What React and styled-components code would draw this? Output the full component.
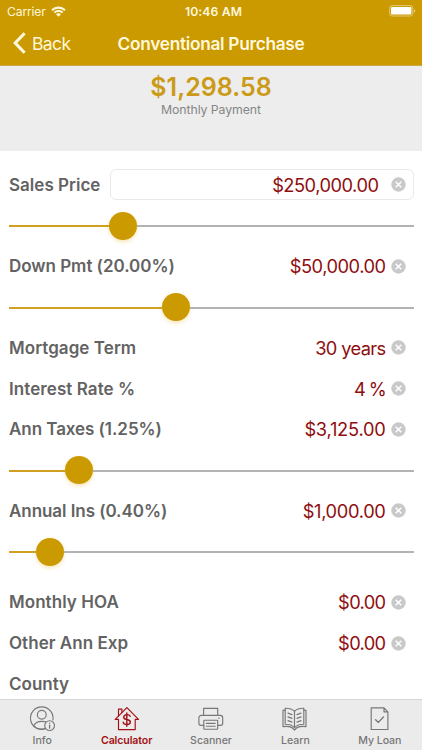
import React from "react";
import styled, { createGlobalStyle } from "styled-components";

const gold = "#cb9900";
const cream = "#fff8dc";
const maroon = "#8f0e10";

const GlobalStyle = createGlobalStyle`
  *, *::before, *::after { box-sizing: border-box; }
  body { margin: 0; background: #fff; font-family: Inter, "Liberation Sans", sans-serif; }
  button { font: inherit; }
`;

const Screen = styled.div`
  display: flex;
  flex-direction: column;
  width: 422px;
  height: 750px;
  overflow: hidden;
  background: #fff;
`;

const Header = styled.header`
  flex: none;
  height: 66px;
  background: ${gold};
  border-bottom: 1px solid #cda748;
  color: ${cream};
`;

const StatusBar = styled.div`
  display: grid;
  grid-template-columns: 1fr auto 1fr;
  align-items: center;
  height: 22px;
  padding: 0 5px 0 7px;
`;

const Carrier = styled.div`
  display: flex;
  align-items: center;
  gap: 5px;
  font-size: 12.2px;
  letter-spacing: -0.18px;
`;

const Clock = styled.div`
  font-size: 12.2px;
  font-weight: 600;
  letter-spacing: 0.12px;
  padding-left: 3px;
`;

const BatterySlot = styled.div`
  display: flex;
  justify-content: flex-end;
`;

const NavBar = styled.div`
  display: grid;
  grid-template-columns: 1fr auto 1fr;
  align-items: center;
  height: 42px;
  padding: 0 12px;
`;

const BackButton = styled.button`
  display: flex;
  align-items: center;
  gap: 6px;
  padding: 0;
  border: 0;
  background: none;
  color: inherit;
  font-size: 17.5px;
  letter-spacing: -0.6px;
`;

const Title = styled.h1`
  margin: 0;
  font-size: 17.3px;
  font-weight: 600;
  letter-spacing: -0.3px;
`;

const Summary = styled.section`
  flex: none;
  height: 85px;
  padding-top: 7px;
  background: #ededed;
  text-align: center;
`;

const Amount = styled.div`
  color: #cb9a16;
  font-size: 25px;
  line-height: 29px;
  font-weight: 600;
  letter-spacing: 0;
`;

const Caption = styled.div`
  color: #868686;
  font-size: 12.3px;
  line-height: 16px;
  letter-spacing: -0.08px;
`;

const Form = styled.main`
  flex: 1;
  min-height: 0;
  overflow: hidden;
  padding: 13.6px 8.5px 0 9px;
`;

const Row = styled.div`
  display: flex;
  align-items: center;
  height: 40.75px;
  margin-top: ${(p) => (p.$spaced ? "10px" : "0")};
`;

const Label = styled.label`
  color: #636363;
  font-size: 17px;
  font-weight: 600;
  letter-spacing: ${(p) => p.$track}px;
  white-space: nowrap;
`;

const Field = styled.div`
  flex: 1;
  display: flex;
  align-items: center;
  justify-content: flex-end;
  height: 31px;
  gap: ${(p) => (p.$boxed ? "12px" : "5px")};
  margin-left: 10px;
  padding-right: ${(p) => (p.$boxed ? "7px" : "8px")};
  border: ${(p) => (p.$boxed ? "1px solid #e9e9e9" : "0")};
  border-radius: 6px;
`;

const Value = styled.span`
  color: ${maroon};
  font-size: 18.3px;
  letter-spacing: ${(p) => p.$track}px;
  white-space: nowrap;
`;

const ClearButton = styled.button`
  display: flex;
  padding: 0;
  border: 0;
  background: none;
`;

const SliderRow = styled.div`
  display: flex;
  align-items: center;
  height: 40.75px;
`;

const Filled = styled.div`
  flex: none;
  width: ${(p) => p.$width}px;
  height: 2px;
  margin-top: 1px;
  background: #d0a020;
`;

const Thumb = styled.div`
  flex: none;
  width: 28px;
  height: 28px;
  border-radius: 50%;
  background: ${gold};
  box-shadow: 0 2px 4px rgba(225, 165, 0, 0.28);
`;

const Remaining = styled.div`
  flex: 1;
  height: 2px;
  margin-top: 1px;
  background: #b3b3b3;
`;

const TabBar = styled.nav`
  flex: none;
  display: grid;
  grid-template-columns: repeat(5, 1fr);
  height: 51px;
  background: #ebebeb;
  border-top: 1px solid #d5d5d5;
`;

const Tab = styled.button`
  display: flex;
  flex-direction: column;
  align-items: center;
  gap: 0;
  padding: 6px 0 0;
  border: 0;
  background: none;
  color: ${(p) => (p.$active ? "#a30f14" : "#777")};
  font-size: 10.6px;
  line-height: 15px;
  font-weight: ${(p) => (p.$active ? 600 : 500)};
  letter-spacing: ${(p) => (p.$active ? "-0.12px" : "-0.05px")};
`;

const WifiIcon = () => (
  <svg width="15" height="11" viewBox="0 0 15 11" fill={cream}>
    <path d="M.3 3.5C4.4-.5 10.6-.5 14.7 3.5L13.2 5C10 1.9 5 1.9 1.8 5Z" />
    <path d="M2.7 5.9c2.8-2.6 6.8-2.6 9.6 0l-1.4 1.4c-2-1.8-4.8-1.8-6.8 0Z" />
    <path d="M5 8.2c1.5-1.3 3.5-1.3 5 0L7.5 10.7Z" />
  </svg>
);

const BatteryIcon = () => (
  <svg width="28" height="12" viewBox="0 0 28 12">
    <rect x=".6" y=".6" width="23.2" height="10.4" rx="2.4" fill="none" stroke="#e4c874" strokeWidth="1" />
    <rect x="2" y="2" width="20.4" height="7.6" rx="1" fill="#fff" />
    <path d="M25 4c1.8.6 1.8 3 0 3.7Z" fill="#e4c874" />
  </svg>
);

const ChevronIcon = () => (
  <svg width="14" height="22" viewBox="0 0 14 22" fill="none" stroke={cream} strokeWidth="3.1">
    <path d="M12.6 1.2 3.2 11l9.4 9.8" />
  </svg>
);

const ClearIcon = () => (
  <svg width="15" height="15" viewBox="0 0 15 15">
    <circle cx="7.5" cy="7.5" r="7.2" fill="#c9c9c9" />
    <path d="m4.7 4.7 5.6 5.6m0-5.6-5.6 5.6" stroke="#fff" strokeWidth="1.5" />
  </svg>
);

const TabSvg = ({ children }) => (
  <svg width="28" height="27" viewBox="0 0 28 27" fill="none" stroke="currentColor" strokeWidth="1.15" strokeLinejoin="round" strokeLinecap="round">
    {children}
  </svg>
);

const InfoIcon = () => (
  <TabSvg>
    <path d="M17.4 22.8A11.3 11.3 0 1 1 24.9 14" />
    <circle cx="13.8" cy="8.7" r="4.4" />
    <path d="M5.6 20.1c1.2-3.2 4.5-4.8 8.5-4.8 1.4 0 2.6.2 3.6.5" />
    <path d="M5.6 20.1c3.2 3 7.4 3.7 11.3 2.4" />
    <circle cx="21.6" cy="19.6" r="4.9" />
    <path d="M21.6 19.2v3M21.6 17.1v.2" strokeWidth="1.3" />
  </TabSvg>
);

const HouseIcon = () => (
  <TabSvg>
    <path d="M2.2 13.4 13.9 1.6 25.5 13.4h-3.3v10.2H5.5V13.4Z" />
    <path d="M5.5 10V3.1h3.4v3.5" />
    <path d="M17.2 10.4c-.4-1.2-1.5-1.8-3.2-1.8-3.9 0-4.4 4.1-.8 4.8l1.5.3c3.9.8 3.3 4.8-.8 4.8-2 0-3.4-.8-3.7-2.2M13.8 7v13.2" strokeWidth="1.4" />
  </TabSvg>
);

const PrinterIcon = () => (
  <TabSvg>
    <path d="M6.6 9.3V2.4h14.1v6.9" />
    <path d="M6.8 19.3H4a2.1 2.1 0 0 1-2.1-2.1v-5.5a2.3 2.3 0 0 1 2.3-2.3h19.2a2.3 2.3 0 0 1 2.3 2.3v5.5a2.1 2.1 0 0 1-2.1 2.1h-2.9" />
    <rect x="6.8" y="14.2" width="13.9" height="9" rx=".6" />
    <path d="M9.3 17.3h8.9M9.3 20.2h8.9M21.7 12.1h.5" />
  </TabSvg>
);

const BookIcon = () => (
  <TabSvg>
    <path d="M13.5 5.2v16.4M13.5 5.2c-2.4-2.1-5.8-3-9.3-2.9v16c3.5-.1 6.9 1 9.3 3.3 2.4-2.3 5.8-3.4 9.3-3.3v-16c-3.5-.1-6.9.8-9.3 2.9Z" />
    <path d="M4.2 4.1 2 4.4v16.2c4.2-.6 7.7-.2 9.5 1.4l2 2 2-2c1.8-1.6 5.3-2 9.5-1.4V4.4l-2.2-.3" />
    <path d="m7 7.1 4 1.5M7 10.9l4 1.5M7 14.6l4 1.5M20 7.1l-4 1.5M20 10.9l-4 1.5M20 14.6l-4 1.5" />
  </TabSvg>
);

const LoanIcon = () => (
  <TabSvg>
    <path d="M5.2 1.8h12.8l3.9 4v17.7H5.2ZM18 1.8v4h3.9" />
    <path d="m9.6 13.7 2.8 2.7 5-5.4" strokeWidth="1.35" />
  </TabSvg>
);

const items = [
  { label: "Sales Price", value: "$250,000.00", boxed: true, slider: 100, track: 0.02, valueTrack: -0.5 },
  { label: "Down Pmt (20.00%)", value: "$50,000.00", slider: 153, track: -0.03, valueTrack: -0.5 },
  { label: "Mortgage Term", value: "30 years", track: 0.06, valueTrack: -0.65 },
  { label: "Interest Rate %", value: "4 %", track: 0.08, valueTrack: -1.1 },
  { label: "Ann Taxes (1.25%)", value: "$3,125.00", slider: 56, track: -0.06, valueTrack: -0.25 },
  { label: "Annual Ins (0.40%)", value: "$1,000.00", slider: 27, track: -0.06, valueTrack: -0.35 },
  { label: "Monthly HOA", value: "$0.00", spaced: true, track: 0.06, valueTrack: -0.65 },
  { label: "Other Ann Exp", value: "$0.00", track: 0.04, valueTrack: -0.65 },
  { label: "County", track: 0 },
];

const tabs = [
  { name: "Info", Icon: InfoIcon },
  { name: "Calculator", Icon: HouseIcon, active: true },
  { name: "Scanner", Icon: PrinterIcon },
  { name: "Learn", Icon: BookIcon },
  { name: "My Loan", Icon: LoanIcon },
];

const Slider = ({ width }) => (
  <SliderRow>
    <Filled $width={width} />
    <Thumb />
    <Remaining />
  </SliderRow>
);

const LoanItem = ({ item }) => (
  <>
    <Row $spaced={item.spaced}>
      <Label $track={item.track}>{item.label}</Label>
      {item.value && (
        <Field $boxed={item.boxed}>
          <Value $track={item.valueTrack}>{item.value}</Value>
          <ClearButton aria-label="Clear"><ClearIcon /></ClearButton>
        </Field>
      )}
    </Row>
    {item.slider && <Slider width={item.slider} />}
  </>
);

export default function App() {
  return (
    <Screen>
      <GlobalStyle />
      <Header>
        <StatusBar>
          <Carrier>Carrier <WifiIcon /></Carrier>
          <Clock>10:46 AM</Clock>
          <BatterySlot><BatteryIcon /></BatterySlot>
        </StatusBar>
        <NavBar>
          <BackButton><ChevronIcon />Back</BackButton>
          <Title>Conventional Purchase</Title>
        </NavBar>
      </Header>
      <Summary>
        <Amount>$1,298.58</Amount>
        <Caption>Monthly Payment</Caption>
      </Summary>
      <Form>
        {items.map((item) => <LoanItem key={item.label} item={item} />)}
      </Form>
      <TabBar>
        {tabs.map(({ name, Icon, active }) => (
          <Tab key={name} $active={active}><Icon />{name}</Tab>
        ))}
      </TabBar>
    </Screen>
  );
}
